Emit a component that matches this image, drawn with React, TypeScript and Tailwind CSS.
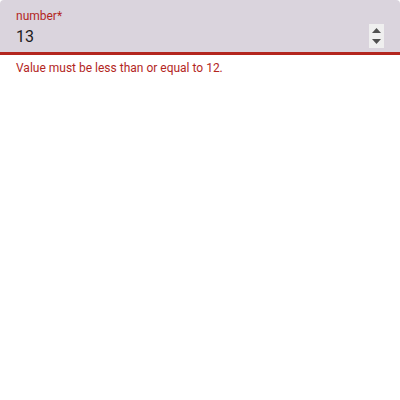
import React from "react";

export default function App() {
  return (
    <div className="w-[400px] h-[400px] bg-white" style={{ fontFamily: "Roboto, 'Liberation Sans', sans-serif" }}>
      <div className="relative h-[55px] bg-[#dad4dd] rounded-t-[4px] border-b-[3px] border-[#b3261e]">
        <div className="pl-4 pt-[8px] text-[12px] leading-4 text-[#b3261e]">number*</div>
        <div className="pl-4 flex items-center h-6 text-[16px] leading-6 text-[#1d1b20]">
          <span className="flex-1 pt-[2px]">13</span>
          <div className="mr-4 w-[15px] h-6 bg-[#efefef] flex flex-col items-center justify-center gap-[6px]">
            <svg width="9" height="5" viewBox="0 0 9 5"><path d="M0 5 L4.5 0 L9 5 Z" fill="#505050" /></svg>
            <svg width="9" height="5" viewBox="0 0 9 5"><path d="M0 0 L4.5 5 L9 0 Z" fill="#505050" /></svg>
          </div>
        </div>
      </div>
      <div className="pl-4 pt-[5px] text-[12px] leading-4 text-[#b3261e]">Value must be less than or equal to 12.</div>
    </div>
  );
}
